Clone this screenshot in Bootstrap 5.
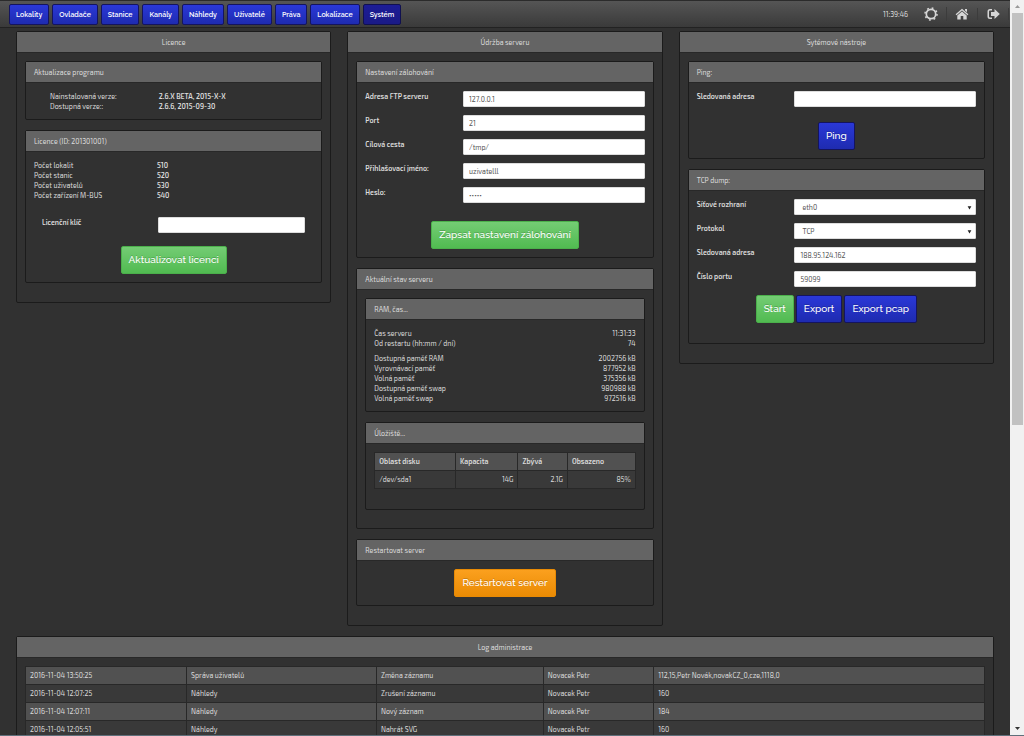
<!DOCTYPE html>
<html lang="cs">
<head>
<meta charset="utf-8">
<meta name="viewport" content="width=device-width, initial-scale=1">
<title>Systém</title>
<link href="https://cdn.jsdelivr.net/npm/bootstrap@5.3.0/dist/css/bootstrap.min.css" rel="stylesheet">
<style>
:root { --edge: #1b1b1b; --head: #646464; }
body { background: #313131; color: #dcdcdc; font: 7px/10px "Exo 2", Roboto, sans-serif; }
.page-view { border-bottom: 1px solid #5f6f7a; }
.page-body { min-width: 0; }
.page-main { padding: 3px 8px 0; }
.topbar { height: 28px; padding: 0 1px 0 9px; background: linear-gradient(#555, #3a3a3a); border-top: 1px solid #2b2b2b; border-bottom: 1px solid #222; }
.btn { --bs-btn-border-radius: 2px; --bs-btn-color: #fff; --bs-btn-hover-color: #fff; --bs-btn-active-color: #fff; font-family: Raleway, Lato, sans-serif; border: 1px solid; }
.nav-set { gap: 3px; }
.btn-set { gap: 2px; }
.columns { --bs-gutter-x: 16px; }
.btn-nav { --bs-btn-padding-x: 6px; --bs-btn-padding-y: 0; --bs-btn-font-size: 7px; line-height: 19px; font-weight: 600; }
.btn-blue { background: linear-gradient(#2a38d8, #1e2bb0); border-color: #14145f; }
.btn-blue.active { background: linear-gradient(#1c1c96, #1a1a86); border-color: #101050; }
.btn-green { background: linear-gradient(#74cc74, #51bb51); border-color: #4bb04b; }
.btn-orange { background: linear-gradient(#fba01e, #ea8b04); border-color: #e88a05; }
.btn-act { --bs-btn-padding-x: 7px; --bs-btn-padding-y: 0; --bs-btn-font-size: 10px; line-height: 26px; font-weight: 500; text-shadow: 0 -1px 0 rgba(0,0,0,.2); }
.tool { color: #d6d6d6; width: 31px; border-right: 1px solid #3c3c3c; text-align: center; }
.panel { border: 1px solid var(--edge); border-radius: 2px; margin-bottom: 10px; }
.panel > .panel-title { background: var(--head); color: #dcdcdc; border-bottom: 1px solid #282828; font-size: 7px; font-weight: 400; line-height: 20px; padding: 0 8px; margin: 0; }
.panel > .panel-main { padding: 8px; }
.panel-outer > .panel-title { text-align: center; }
.panel-outer > .panel-main { padding-bottom: 9px; }
.panel > .panel-roomy { padding-bottom: 20px; }
.panel b { font-weight: 600; }
.form-line { display: flex; margin-bottom: 8px; }
.form-line label { width: 35%; font-weight: 600; line-height: 10px; }
.form-line .form-control, .form-line .form-select { flex: 1; width: auto; min-width: 0; min-height: 0; height: 16px; border: 1px solid #ddd; border-radius: 1px; padding: 0 5px; font-size: 7px; line-height: 14px; color: #555; background-color: #fff; }
.form-line .form-select { padding-left: 7px; background-image: url("data:image/svg+xml,%3Csvg xmlns='http://www.w3.org/2000/svg' viewBox='0 0 8 8'%3E%3Cpath d='M1 2h6L4 7z' fill='%23222'/%3E%3C/svg%3E"); background-size: 5px 5px; background-position: right 3px center; }
.license-line { padding: 0 8px; margin: 17px 0 13px; }
.license-line label { width: 44%; }
.fact-name { width: 44%; }
.memory-list { margin-top: 5px; }
.submit-line { text-align: center; margin-top: 15px; }
.submit-line.submit-late { margin-top: 18px; }
.grid { --bs-table-bg: #393939; --bs-table-color: #dcdcdc; table-layout: fixed; border-color: #282828; line-height: 9px; margin: 0; }
.grid > :not(caption) > * > * { padding: 4px; }
.grid th, .grid tr.odd { --bs-table-bg: #515151; }
.grid th { font-weight: 600; }
.scroll-rail { width: 14px; flex: none; background: #f1f1f1; padding: 0 1px 0 2px; }
.scroll-rail .arrow { height: 13px; }
.scroll-rail .thumb { height: 56%; background: #c1c1c1; }
</style>
</head>
<body>
<div class="page-view d-flex vh-100 overflow-hidden">
<div class="page-body flex-fill">
<nav class="topbar d-flex align-items-center">
  <div class="d-flex flex-fill nav-set">
    <button class="btn btn-nav btn-blue" type="button">Lokality</button>
    <button class="btn btn-nav btn-blue" type="button">Ovladače</button>
    <button class="btn btn-nav btn-blue" type="button">Stanice</button>
    <button class="btn btn-nav btn-blue" type="button">Kanály</button>
    <button class="btn btn-nav btn-blue" type="button">Náhledy</button>
    <button class="btn btn-nav btn-blue" type="button">Uživatelé</button>
    <button class="btn btn-nav btn-blue" type="button">Práva</button>
    <button class="btn btn-nav btn-blue" type="button">Lokalizace</button>
    <button class="btn btn-nav btn-blue active" type="button">Systém</button>
  </div>
  <span class="me-2">11:39:46</span>
  <a class="tool" href="#" aria-label="Nastavení"><svg width="14" height="14" viewBox="0 0 14 14" fill="none" stroke="currentColor"><circle cx="7" cy="7" r="4.700" stroke-width="1.700"/><circle cx="7" cy="7" r="6" stroke-width="1.500" stroke-dasharray="1.800 2.910"/></svg></a>
  <a class="tool" href="#" aria-label="Domů"><svg width="14" height="12" viewBox="0 0 14 12" fill="currentColor"><path d="M7 .8 13.4 6.2l-.9 1L7 2.6 1.5 7.2l-.9-1zM10 1h2v3.200L10 2.500zM7 3.600l4.700 3.900V11.500H8.300V8H5.700v3.500H2.300v-4z"/></svg></a>
  <a class="tool" href="#" aria-label="Odhlásit"><svg width="13" height="12" viewBox="0 0 13 12" fill="currentColor"><path d="M5 1v1.500H3Q2 2.500 2 3.500v5q0 1 1 1h2V11H3Q.5 11 .5 8.500v-5Q.5 1 3 1zM7.500 1 12.800 6l-5.300 5V8H4V4h3.500z"/></svg></a>
</nav>
<main class="page-main">
  <div class="row mx-0 columns">
    <div class="col-4">
      <section class="panel panel-outer">
        <h2 class="panel-title">Licence</h2>
        <div class="panel-main">
          <section class="panel">
            <h3 class="panel-title">Aktualizace programu</h3>
            <div class="panel-main px-4">
              <div class="d-flex"><span class="fact-name">Nainstalovaná verze:</span><b>2.6.X BETA, 2015-X-X</b></div>
              <div class="d-flex"><span class="fact-name">Dostupná verze::</span><b>2.6.6, 2015-09-30</b></div>
            </div>
          </section>
          <section class="panel">
            <h3 class="panel-title">Licence (ID: 201301001)</h3>
            <div class="panel-main">
              <div class="d-flex"><span class="fact-name">Počet lokalit</span><b>510</b></div>
              <div class="d-flex"><span class="fact-name">Počet stanic</span><b>520</b></div>
              <div class="d-flex"><span class="fact-name">Počet uživatelů</span><b>530</b></div>
              <div class="d-flex"><span class="fact-name">Počet zařízení M-BUS</span><b>540</b></div>
              <div class="form-line license-line"><label for="key">Licenční klíč</label><input class="form-control" id="key" type="text"></div>
              <div class="text-center"><button class="btn btn-act btn-green" type="button">Aktualizovat licenci</button></div>
            </div>
          </section>
        </div>
      </section>
    </div>
    <div class="col-4">
      <section class="panel panel-outer">
        <h2 class="panel-title">Údržba serveru</h2>
        <div class="panel-main">
          <section class="panel">
            <h3 class="panel-title">Nastavení zálohování</h3>
            <div class="panel-main">
              <div class="form-line"><label for="ftp">Adresa FTP serveru</label><input class="form-control" id="ftp" type="text" value="127.0.0.1"></div>
              <div class="form-line"><label for="port">Port</label><input class="form-control" id="port" type="text" value="21"></div>
              <div class="form-line"><label for="path">Cílová cesta</label><input class="form-control" id="path" type="text" value="/tmp/"></div>
              <div class="form-line"><label for="user">Přihlašovací jméno:</label><input class="form-control" id="user" type="text" value="uzivatelll"></div>
              <div class="form-line"><label for="pass">Heslo:</label><input class="form-control" id="pass" type="password" value="heslo"></div>
              <div class="submit-line submit-late"><button class="btn btn-act btn-green" type="button">Zapsat nastavení zálohování</button></div>
            </div>
          </section>
          <section class="panel">
            <h3 class="panel-title">Aktuální stav serveru</h3>
            <div class="panel-main">
              <section class="panel">
                <h4 class="panel-title">RAM, čas...</h4>
                <div class="panel-main">
                  <div class="d-flex justify-content-between"><span>Čas serveru</span><span>11:31:33</span></div>
                  <div class="d-flex justify-content-between"><span>Od restartu (hh:mm / dní)</span><span>74</span></div>
                  <div class="memory-list">
                    <div class="d-flex justify-content-between"><span>Dostupná paměť RAM</span><span>2002756 kB</span></div>
                    <div class="d-flex justify-content-between"><span>Vyrovnávací paměť</span><span>877952 kB</span></div>
                    <div class="d-flex justify-content-between"><span>Volná paměť</span><span>375356 kB</span></div>
                    <div class="d-flex justify-content-between"><span>Dostupná paměť swap</span><span>980988 kB</span></div>
                    <div class="d-flex justify-content-between"><span>Volná paměť swap</span><span>972516 kB</span></div>
                  </div>
                </div>
              </section>
              <section class="panel">
                <h4 class="panel-title">Úložiště...</h4>
                <div class="panel-main panel-roomy">
                  <table class="table table-bordered grid">
                    <colgroup><col style="width:31%"><col style="width:24%"><col style="width:19%"><col></colgroup>
                    <thead><tr><th>Oblast disku</th><th>Kapacita</th><th>Zbývá</th><th>Obsazeno</th></tr></thead>
                    <tbody><tr><td>/dev/sda1</td><td class="text-end">14G</td><td class="text-end">2.1G</td><td class="text-end">85%</td></tr></tbody>
                  </table>
                </div>
              </section>
            </div>
          </section>
          <section class="panel">
            <h3 class="panel-title">Restartovat server</h3>
            <div class="panel-main text-center"><button class="btn btn-act btn-orange" type="button">Restartovat server</button></div>
          </section>
        </div>
      </section>
    </div>
    <div class="col-4">
      <section class="panel panel-outer">
        <h2 class="panel-title">Sytémové nástroje</h2>
        <div class="panel-main">
          <section class="panel">
            <h3 class="panel-title">Ping:</h3>
            <div class="panel-main">
              <div class="form-line"><label for="ping">Sledovaná adresa</label><input class="form-control" id="ping" type="text"></div>
              <div class="submit-line"><button class="btn btn-act btn-blue" type="button">Ping</button></div>
            </div>
          </section>
          <section class="panel">
            <h3 class="panel-title">TCP dump:</h3>
            <div class="panel-main panel-roomy">
              <div class="form-line"><label for="iface">Síťové rozhraní</label><select class="form-select" id="iface"><option>eth0</option></select></div>
              <div class="form-line"><label for="proto">Protokol</label><select class="form-select" id="proto"><option>TCP</option></select></div>
              <div class="form-line"><label for="addr">Sledovaná adresa</label><input class="form-control" id="addr" type="text" value="188.95.124.162"></div>
              <div class="form-line"><label for="tport">Číslo portu</label><input class="form-control" id="tport" type="text" value="59099"></div>
              <div class="d-flex justify-content-center btn-set">
                <button class="btn btn-act btn-green" type="button">Start</button>
                <button class="btn btn-act btn-blue" type="button">Export</button>
                <button class="btn btn-act btn-blue" type="button">Export pcap</button>
              </div>
            </div>
          </section>
        </div>
      </section>
    </div>
  </div>
  <section class="panel panel-outer mx-2">
    <h2 class="panel-title">Log administrace</h2>
    <div class="panel-main">
      <table class="table table-bordered grid">
        <colgroup><col style="width:16.8%"><col style="width:19.8%"><col style="width:17.4%"><col style="width:11.5%"><col></colgroup>
        <tbody>
          <tr class="odd"><td>2016-11-04 13:50:25</td><td>Správa uživatelů</td><td>Změna záznamu</td><td>Novacek Petr</td><td>112,15,Petr Novák,novakCZ_0,cze,1118,0</td></tr>
          <tr><td>2016-11-04 12:07:25</td><td>Náhledy</td><td>Zrušení záznamu</td><td>Novacek Petr</td><td>160</td></tr>
          <tr class="odd"><td>2016-11-04 12:07:11</td><td>Náhledy</td><td>Nový záznam</td><td>Novacek Petr</td><td>184</td></tr>
          <tr><td>2016-11-04 12:05:51</td><td>Náhledy</td><td>Nahrát SVG</td><td>Novacek Petr</td><td>160</td></tr>
        </tbody>
      </table>
    </div>
  </section>
</main>
</div>
<div class="scroll-rail d-flex flex-column" aria-hidden="true">
  <svg class="arrow" viewBox="0 0 11 13"><path d="M3 8h5L5.500 5z" fill="#999"/></svg>
  <div class="thumb"></div>
  <svg class="arrow mt-auto" viewBox="0 0 11 13"><path d="M3 5h5L5.500 8z" fill="#333"/></svg>
</div>
</div>
<script src="https://cdn.jsdelivr.net/npm/bootstrap@5.3.0/dist/js/bootstrap.bundle.min.js"></script>
</body>
</html>
